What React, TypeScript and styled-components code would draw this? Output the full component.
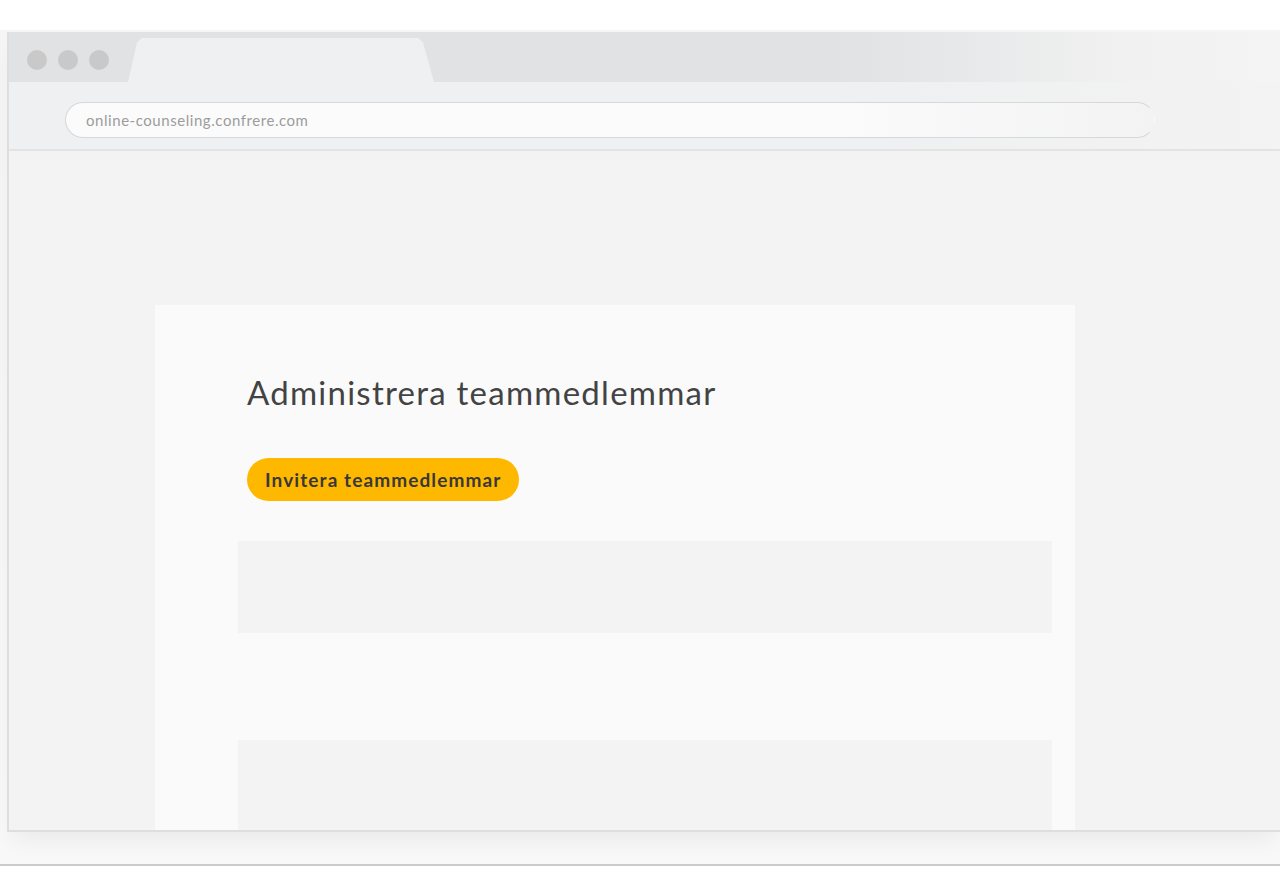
import React from 'react';
import styled, { createGlobalStyle } from 'styled-components';

const Colors = {
  chrome: '#e0e2e4',
  toolbar: '#eff0f1',
  content: '#f3f3f3',
  card: '#fafafa',
  block: '#f3f3f3',
  yellow: '#ffb800',
  text: '#434343',
};

const GlobalStyle = createGlobalStyle`
  html, body {
    margin: 0;
    padding: 0;
    background: #ffffff;
    font-family: Lato, "Noto Sans", sans-serif;
  }
`;

const Stage = styled.div`
  margin-top: 30px;
  height: 834px;
  background: linear-gradient(to bottom, #f5f5f5, #f8f8f8);
  border-bottom: 2px solid #cbcbcb;
  overflow: hidden;
`;

const Window = styled.div`
  margin: 2px 0 0 7px;
  height: 798px;
  display: flex;
  flex-direction: column;
  overflow: hidden;
  border-left: 2px solid #dedede;
  border-bottom: 2px solid #dedede;
  box-shadow: 0 14px 22px -6px rgba(0, 0, 0, 0.06);
`;

const TitleBar = styled.div`
  height: 50px;
  flex-shrink: 0;
  display: flex;
  align-items: flex-end;
  padding-left: 18px;
  background: linear-gradient(to right, ${Colors.chrome} 0%, ${Colors.chrome} 65%, #f1f1f1 88%, #f4f4f4 100%);
`;

const Dots = styled.div`
  display: flex;
  gap: 11px;
  align-self: center;
  margin-top: 6px;
`;

const Dot = styled.span`
  width: 20px;
  height: 20px;
  border-radius: 50%;
  background: #c9c9c9;
`;

const Tab = styled.div`
  width: 306px;
  height: 44px;
  margin-left: 19px;
  background: ${Colors.toolbar};
  clip-path: polygon(0 100%, 9px 10%, 14px 0, 290px 0, 295px 10%, 100% 100%);
`;

const Toolbar = styled.div`
  height: 69px;
  flex-shrink: 0;
  display: flex;
  align-items: flex-start;
  padding: 20px 0 0 56px;
  background: linear-gradient(to right, ${Colors.toolbar} 70%, #f3f3f3 100%);
  border-bottom: 2px solid #e3e3e3;
  box-sizing: border-box;
`;

const AddressBar = styled.div`
  width: 1090px;
  height: 36px;
  display: flex;
  align-items: center;
  padding-left: 20px;
  box-sizing: border-box;
  border-radius: 18px;
  border: 1px solid #d7d8d9;
  border-right-color: transparent;
  background: linear-gradient(to right, #fbfbfb 70%, #f3f3f3 100%);
  color: #9c9c9c;
  font-size: 15px;
  letter-spacing: 0.55px;
`;

const Content = styled.div`
  flex: 1;
  background: ${Colors.content};
  padding: 154px 0 0 146px;
`;

const Card = styled.div`
  width: 920px;
  height: 100%;
  box-sizing: border-box;
  background: ${Colors.card};
  padding: 67px 0 0 92px;
  display: flex;
  flex-direction: column;
  align-items: flex-start;
`;

const Title = styled.h1`
  margin: 0;
  font-size: 33px;
  font-weight: 400;
  line-height: 40px;
  color: ${Colors.text};
  letter-spacing: 1.25px;
`;

const InviteButton = styled.button`
  margin-top: 46px;
  height: 43px;
  padding: 0 18px;
  border: none;
  border-radius: 22px;
  background: ${Colors.yellow};
  color: #383838;
  font-family: Lato, "Noto Sans", sans-serif;
  font-size: 19px;
  font-weight: 700;
  letter-spacing: 1.1px;
  cursor: pointer;
`;

const Placeholder = styled.div<{ $top: number }>`
  margin: ${(p) => p.$top}px 0 0 -9px;
  width: 814px;
  height: 92px;
  flex-shrink: 0;
  background: ${Colors.block};
`;

export default function App() {
  return (
    <>
      <GlobalStyle />
      <Stage>
        <Window>
          <TitleBar>
            <Dots>
              <Dot />
              <Dot />
              <Dot />
            </Dots>
            <Tab />
          </TitleBar>
          <Toolbar>
            <AddressBar>online-counseling.confrere.com</AddressBar>
          </Toolbar>
          <Content>
            <Card>
              <Title>Administrera teammedlemmar</Title>
              <InviteButton>Invitera teammedlemmar</InviteButton>
              <Placeholder $top={40} />
              <Placeholder $top={107} />
            </Card>
          </Content>
        </Window>
      </Stage>
    </>
  );
}
